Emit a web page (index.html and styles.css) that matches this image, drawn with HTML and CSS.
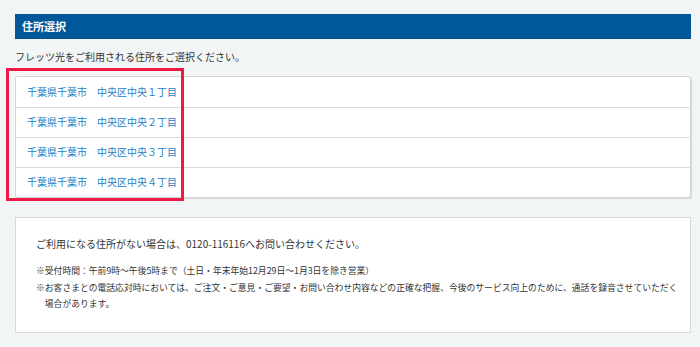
FILE: index.html
```html
<!DOCTYPE html>
<html lang="ja">
<head>
    <meta charset="UTF-8">
    <meta name="viewport" content="width=device-width, initial-scale=1.0">
    <title>住所選択</title>
    <link rel="stylesheet" href="styles.css">
</head>
<body>
    <div class="container">
        <h2 class="section-title">住所選択</h2>
        <p class="lead">フレッツ光をご利用される住所をご選択ください。</p>

        <div class="address-wrap">
            <ul class="address-list">
                <li><a href="#">千葉県千葉市　中央区中央１丁目</a></li>
                <li><a href="#">千葉県千葉市　中央区中央２丁目</a></li>
                <li><a href="#">千葉県千葉市　中央区中央３丁目</a></li>
                <li><a href="#">千葉県千葉市　中央区中央４丁目</a></li>
            </ul>
            <div class="highlight"></div>
        </div>

        <div class="info">
            <p class="info-main">ご利用になる住所がない場合は、0120-116116へお問い合わせください。</p>
            <ul class="notes">
                <li>※受付時間：午前9時～午後5時まで（土日・年末年始12月29日～1月3日を除き営業）</li>
                <li>※お客さまとの電話応対時においては、ご注文・ご意見・ご要望・お問い合わせ内容などの正確な把握、今後のサービス向上のために、通話を録音させていただく場合があります。</li>
            </ul>
        </div>
    </div>
</body>
</html>
```

FILE: styles.css
```css
* {
    box-sizing: border-box;
}
body {
    margin: 0;
    font-family: 'Noto Sans CJK JP', 'Noto Sans', sans-serif;
    background-color: #f2f5f5;
    color: #333;
}
.container {
    width: 676px;
    margin-left: 15px;
    padding-top: 14px;
}
.section-title {
    margin: 0;
    height: 25px;
    line-height: 25px;
    padding-left: 7px;
    font-size: 11px;
    font-weight: bold;
    color: #fff;
    background-color: #00579a;
    border-bottom: 1px solid #0a4f86;
}
.lead {
    margin: 10px 0 11px;
    font-size: 10px;
    line-height: 16px;
}
.address-wrap {
    position: relative;
}
.address-list {
    list-style: none;
    margin: 0;
    padding: 0;
    background-color: #fff;
    border: 1px solid #d4d4d4;
    border-radius: 3px;
    box-shadow: 1px 1px 1px rgba(0, 0, 0, 0.12);
}
.address-list li {
    height: 30px;
    line-height: 28px;
    padding-left: 11px;
    border-top: 1px solid #dcdcdc;
    font-size: 10px;
}
.address-list li:first-child {
    border-top: none;
    height: 30px;
    line-height: 29px;
}
.address-list a {
    color: #2b80c4;
    text-decoration: none;
}
.highlight {
    position: absolute;
    left: -9px;
    top: -8px;
    width: 178px;
    height: 133px;
    border: 3px solid #f21846;
    pointer-events: none;
}
.info {
    margin-top: 19px;
    padding: 18px 4px 19px 20px;
    background-color: #fff;
    border: 1px solid #d8d8d8;
}
.info-main {
    margin: 0 0 11px;
    font-size: 10px;
    line-height: 16px;
}
.notes {
    list-style: none;
    margin: 0;
    padding: 0;
}
.notes li {
    font-size: 8.8px;
    line-height: 16.5px;
    padding-left: 1em;
    text-indent: -1em;
}
```
